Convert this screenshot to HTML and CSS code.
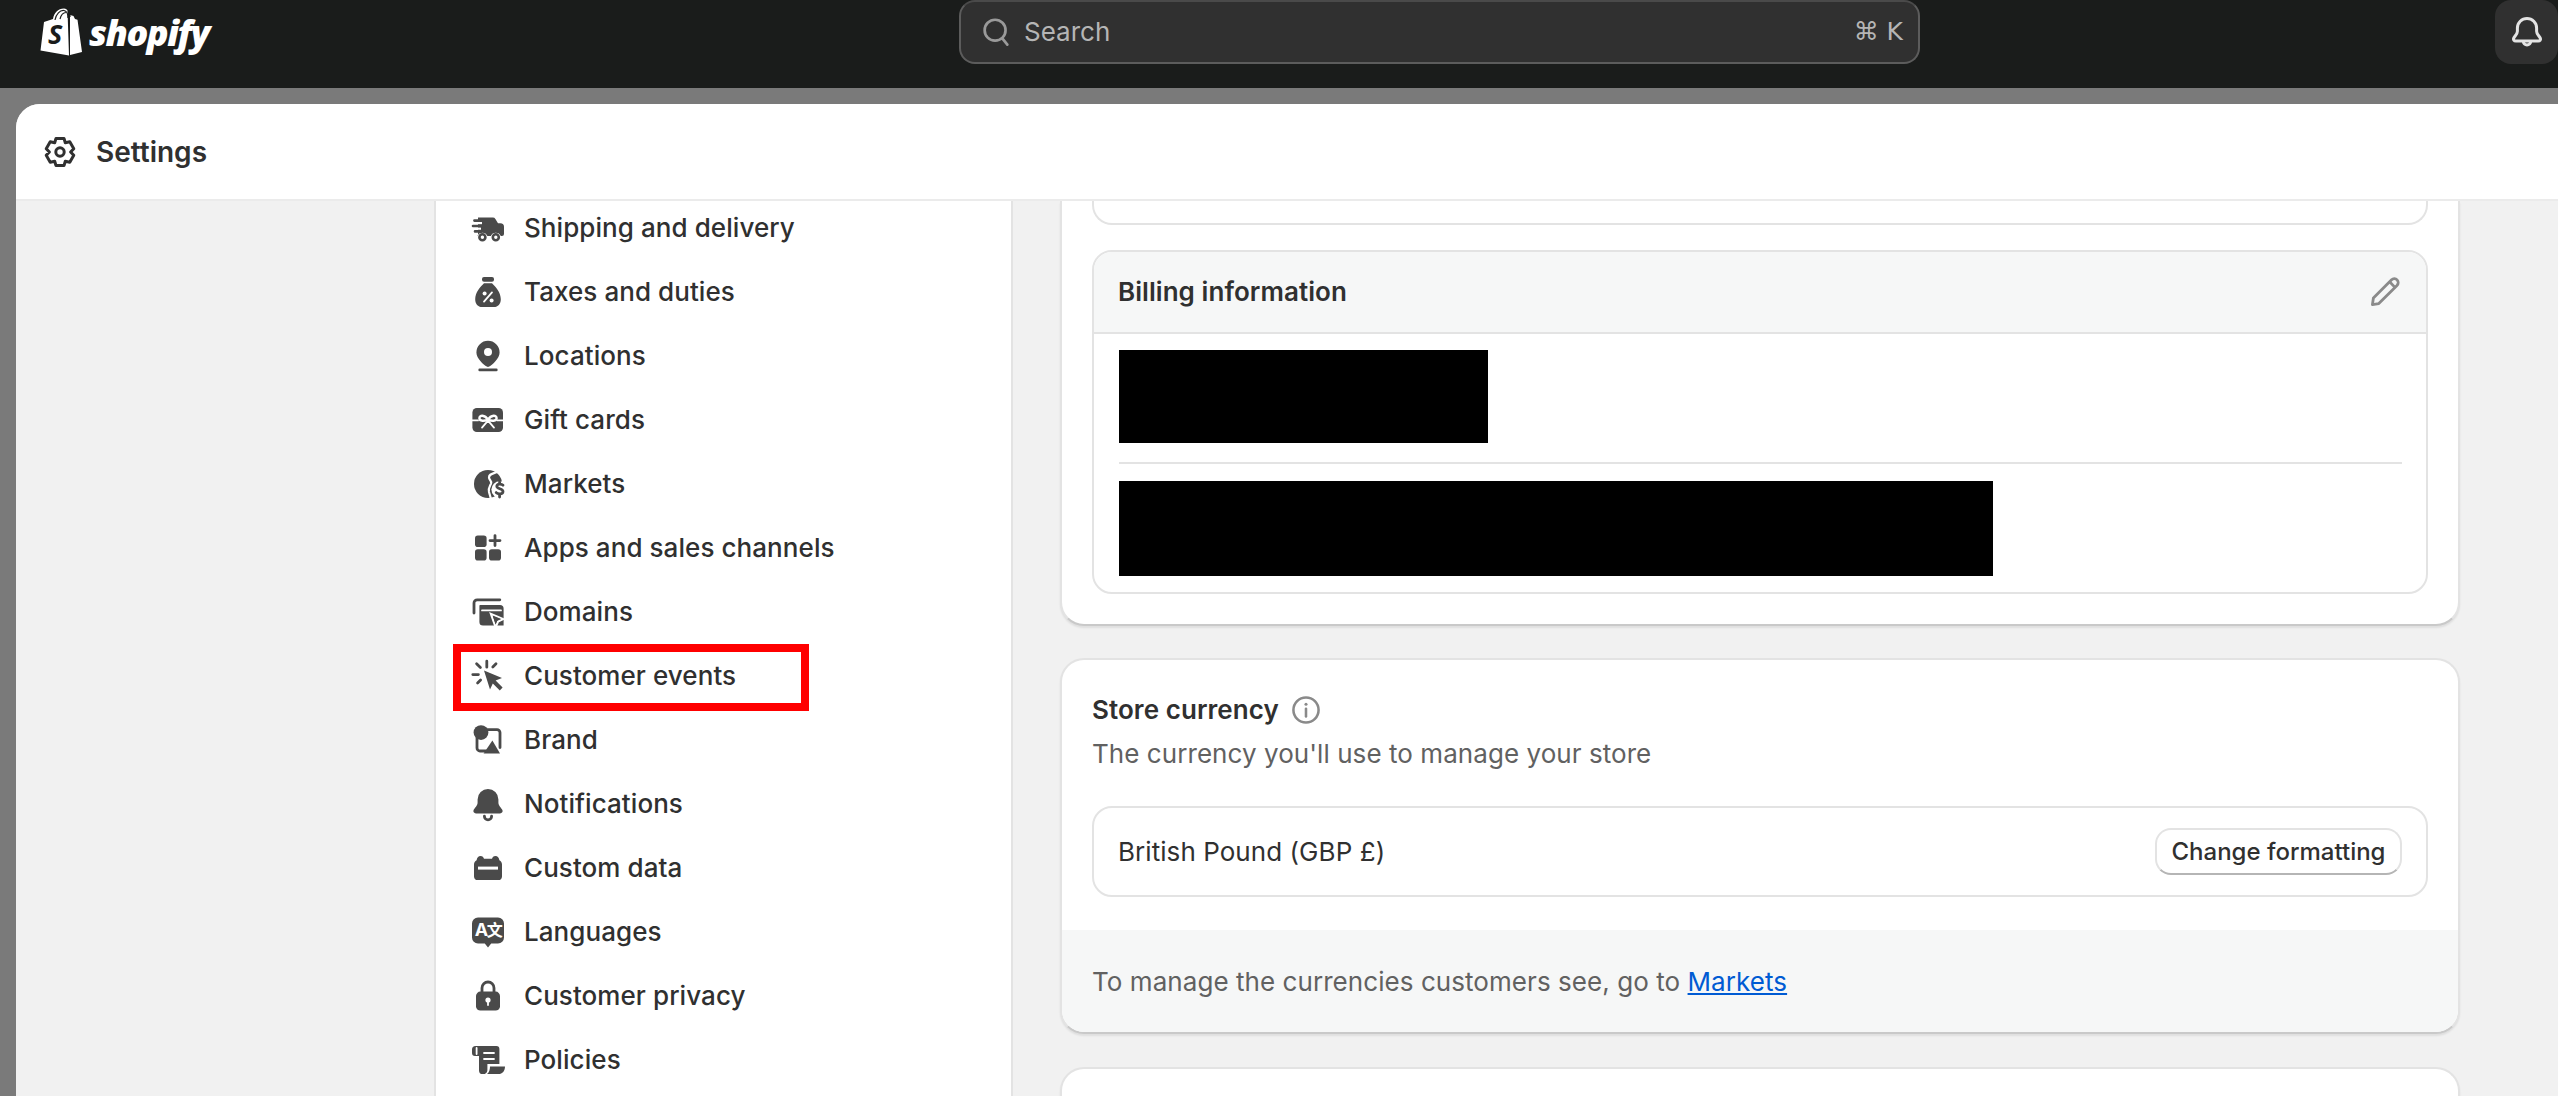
FILE: index.html
```html
<!DOCTYPE html>
<html lang="en">
<head>
<meta charset="utf-8">
<title>Settings</title>
<link rel="stylesheet" href="styles.css">
</head>
<body>
<header class="topbar">
  <div class="brand-slot">
    <svg class="bag" viewBox="0 0 42 48" aria-hidden="true">
      <path class="bag-left" d="M0.5 42.5 L4 14 L13 11 C14 5 18 0.5 24 0.5 C25.5 0.5 26.8 1.2 27.5 2.5 L29 47.5 Z"/>
      <path class="bag-right" d="M30 7 L33.5 8 L35 11 L37.5 11.8 L42 44 L30 47 Z"/>
      <path class="bag-handle" d="M15 12 C16 6 20 2 24 2.5 C27 3 28 6 28 10 M20 11 C21 7 23 4.500 26 4.500 M30 9 C30 6 29.500 4 28 3"/>
      <text class="bag-s" x="8" y="36">S</text>
    </svg>
    <span class="wordmark">shopify</span>
  </div>
  <div class="search">
    <svg class="search-icon" viewBox="0 0 20 20" aria-hidden="true"><circle cx="9.500" cy="9" r="5.800"/><path d="M13.500 13.500 L16.300 17"/></svg>
    <span class="search-label">Search</span>
    <span class="search-key">⌘ K</span>
  </div>
  <div class="top-spacer"></div>
  <button class="bell-btn" aria-label="Notifications">
    <svg class="bell" viewBox="0 0 20 20" aria-hidden="true"><path d="M10 3.200a4.800 4.800 0 0 0-4.800 4.800v1.600c0 1.500-1.300 2.400-1.800 3.400-.4.800.1 1.500 1 1.500h11.200c.9 0 1.400-.7 1-1.500-.5-1-1.800-1.900-1.800-3.400V8A4.800 4.800 0 0 0 10 3.200z"/><path d="M8.200 14.700a1.800 1.800 0 0 0 3.600 0"/></svg>
  </button>
</header>

<div class="workspace">
  <section class="panel">
    <div class="panel-head">
      <svg class="gear" viewBox="0 0 20 20" aria-hidden="true"><path d="M8 3.200H12L12.650 5.400L14.890 4.870L16.890 8.330L15.300 10L16.890 11.670L14.890 15.130L12.650 14.600L12 16.800H8L7.350 14.600L5.110 15.130L3.110 11.670L4.700 10L3.110 8.330L5.110 4.870L7.350 5.400Z"/><circle cx="10" cy="10" r="2.100"/></svg>
      <h1 class="panel-title">Settings</h1>
    </div>
    <div class="panel-body">
      <nav class="side">
        <a class="side-item"><svg class="ico" viewBox="0 0 20 20"><path d="M5 4.800h7.400a1.500 1.500 0 0 1 1.300.7L15 7.600h1.200A1.800 1.800 0 0 1 18 9.400V13a1 1 0 0 1-1 1h-.6a2.700 2.700 0 0 0-5 0H9.700a2.700 2.700 0 0 0-5 0H5z"/><path class="cut" d="M2 7.600h5M2 10.300h4.500"/><path class="dash" d="M3.200 6.300h5.200M2.500 9h5.800M3.500 11.700h3"/><circle class="wheel" cx="7.200" cy="14.600" r="1.500"/><circle class="wheel" cx="13.900" cy="14.600" r="1.500"/></svg><span>Shipping and delivery</span></a>
        <a class="side-item"><svg class="ico" viewBox="0 0 20 20"><rect x="7" y="2.500" width="6" height="2.400" rx="1"/><path d="M8 5.600h4c1.800 1.900 4.400 4.400 4.400 8 0 2.400-1.400 3.900-3.400 3.900H7c-2 0-3.400-1.500-3.400-3.900 0-3.600 2.600-6.100 4.400-8z"/><path class="cut thin" d="M12 10.200 L8 14.800"/><circle class="hole" cx="8.300" cy="10.800" r="1"/><circle class="hole" cx="11.800" cy="14.200" r="1"/></svg><span>Taxes and duties</span></a>
        <a class="side-item"><svg class="ico" viewBox="0 0 20 20"><path d="M10 2.400a5.800 5.800 0 0 1 5.800 5.800c0 3-3.600 6.100-5.200 7.100a1.100 1.100 0 0 1-1.200 0c-1.600-1-5.200-4.100-5.200-7.100A5.800 5.800 0 0 1 10 2.400z"/><circle class="hole" cx="10" cy="8" r="2"/><rect x="5.200" y="16.300" width="9.600" height="1.300" rx=".6"/></svg><span>Locations</span></a>
        <a class="side-item"><svg class="ico" viewBox="0 0 20 20"><rect x="2.200" y="4" width="15.300" height="12" rx="2.200"/><path class="cut thin" d="M2 10.200h3M14.800 10.200h3M7 13.800L10 10.300L13 13.800"/><path class="cut bow" d="M10 10c-1.600-2.900-4.400-2.500-4.300-.8.100 1.500 2.400 1.300 4.300.8zM10 10c1.600-2.900 4.400-2.500 4.300-.8-.1 1.500-2.400 1.300-4.300.8z"/></svg><span>Gift cards</span></a>
        <a class="side-item"><svg class="ico" viewBox="0 0 20 20"><circle cx="10" cy="10" r="7"/><circle class="hole" cx="15.900" cy="12.800" r="4.200"/><path class="cut" d="M14.500 4 C12 5 10.500 5 10.500 6.800 C10.500 8 12 8.300 11.500 9.800 C11 11 10 12 10.500 14 L11.500 17.500"/><path class="line" d="M17.500 10.600c-.6-.7-3-1-3.100.5-.1 1.500 3.200 1 3.100 2.700-.1 1.500-2.700 1.300-3.400.5M15.800 9v1M15.800 15.100v1.400"/></svg><span>Markets</span></a>
        <a class="side-item"><svg class="ico" viewBox="0 0 20 20"><rect x="3.500" y="3.800" width="5.800" height="5.700" rx="1.400"/><rect x="3.500" y="10.600" width="5.800" height="5.700" rx="1.400"/><rect x="10.500" y="10.600" width="6" height="5.700" rx="1.400"/><path class="line" d="M13.500 3.800v5M11 6.300h5"/></svg><span>Apps and sales channels</span></a>
        <a class="side-item"><svg class="ico" viewBox="0 0 20 20"><path class="line" d="M3 10.500V5.500a1.600 1.600 0 0 1 1.600-1.600h11.300"/><path d="M6 6.500h10a1.800 1.800 0 0 1 1.800 1.800v8.500H7.500A1.800 1.800 0 0 1 5.700 15V6.800z"/><path class="cut thin" d="M7 9.200h9.500"/><path class="cut" d="M11.500 11 L17.500 13.500 L15 14.800 L13.800 17.500 Z"/><path d="M12.300 11.800 L16.600 13.500 L14.600 14.400 L13.800 16.400 Z"/></svg><span>Domains</span></a>
        <a class="side-item item-events"><svg class="ico" viewBox="0 0 20 20"><path class="line" d="M9.400 2.600v3M4.300 3.900l1.900 1.900M14 3.900l-1.600 1.600M2.400 9.300h2.800M4.800 13.500l1.500-1.500"/><path d="M8 7.200 L17 11 L13.800 12.300 L17.300 15.800 L15.900 17.200 L12.400 13.700 L11 16.800 Z"/></svg><span>Customer events</span></a>
        <a class="side-item"><svg class="ico" viewBox="0 0 20 20"><circle cx="6.500" cy="6.300" r="3.700"/><path class="line" d="M9 4.800h5.500a1.500 1.500 0 0 1 1.500 1.500v7.500M4.500 9v5a1.500 1.500 0 0 0 1.500 1.500h3"/><path d="M7.800 16.700 L12.200 10.300 L16 16.700 Z"/></svg><span>Brand</span></a>
        <a class="side-item"><svg class="ico" viewBox="0 0 20 20"><path d="M10 2.500a5.200 5.200 0 0 0-5.200 5.200v1.500c0 1.700-1.500 2.600-2 3.800-.4.900.2 1.700 1.200 1.700h12c1 0 1.600-.8 1.200-1.700-.5-1.200-2-2.100-2-3.800V7.700A5.200 5.200 0 0 0 10 2.500z"/><path class="line" d="M8.200 16.100a1.800 1.800 0 0 0 3.600 0"/></svg><span>Notifications</span></a>
        <a class="side-item"><svg class="ico" viewBox="0 0 20 20"><path d="M6.300 4c.9 0 1.500.6 1.700 1.400h4c.2-.8.800-1.400 1.700-1.400 1.200 0 1.800.9 2 2.100.8.400 1.300 1.200 1.300 2.200v5.900a1.900 1.900 0 0 1-1.900 1.800H4.900A1.900 1.900 0 0 1 3 14.200V8.300c0-1 .5-1.800 1.300-2.200C4.500 4.900 5.100 4 6.300 4z"/><rect class="hole" x="5" y="9.300" width="10" height="1.500"/></svg><span>Custom data</span></a>
        <a class="side-item"><svg class="ico" viewBox="0 0 20 20"><path d="M5 2.800h10a3 3 0 0 1 3 3v7a3 3 0 0 1-3 3h-3.400L10 17.800 8.400 15.800H5a3 3 0 0 1-3-3v-7a3 3 0 0 1 3-3z"/><text class="lang-glyph" x="3.400" y="12">A</text><text class="lang-glyph lang-cjk" x="9.400" y="12.200">文</text></svg><span>Languages</span></a>
        <a class="side-item"><svg class="ico" viewBox="0 0 20 20"><path class="line" d="M7 9V6a3 3 0 0 1 6 0v3"/><rect x="4" y="7.800" width="12" height="9.500" rx="2.200"/><circle class="hole" cx="10" cy="12" r="1.300"/><path class="cut thin" d="M10 12.500v2"/></svg><span>Customer privacy</span></a>
        <a class="side-item"><svg class="ico" viewBox="0 0 20 20"><path d="M3.800 3h10.400a1.500 1.500 0 0 1 1.500 1.500V12h-6v3c0 .9-.5 1.700-1.300 2H7.300a1.800 1.800 0 0 1-1.800-1.800V8H3.500A1.500 1.500 0 0 1 2 6.500V4.800A1.800 1.800 0 0 1 3.800 3z"/><path class="cut thin" d="M4.300 4v3M8 6.500h5M8 9.500h5"/><path d="M11 13.200h7.500c0 2.200-1.200 3.800-3.300 3.800H9.500c1-.8 1.500-2.200 1.500-3.800z"/></svg><span>Policies</span></a>
        <div class="item-mark"></div>
      </nav>

      <main class="content">
        <section class="card card-billing">
          <div class="sub-tail"></div>
          <div class="sub sub-billing">
            <div class="sub-head">
              <h2 class="sub-title">Billing information</h2>
              <svg class="pencil" viewBox="0 0 20 20" aria-hidden="true"><path d="M3.700 16.300 L4.200 13 L13.300 3.900 A1.700 1.700 0 0 1 16 6.700 L6.900 15.800 Z"/><path d="M12.300 4.900 L15 7.700"/></svg>
            </div>
            <div class="redact-row"><div class="redact redact-a"></div></div>
            <div class="redact-row redact-row-last"><div class="redact redact-b"></div></div>
          </div>
        </section>

        <section class="card card-currency">
          <div class="currency-top">
            <div class="title-line">
              <h2 class="card-title">Store currency</h2>
              <svg class="info" viewBox="0 0 20 20" aria-hidden="true"><circle cx="10" cy="10" r="7.400"/><path d="M10 9.300v4.500"/><circle class="info-dot" cx="10" cy="6.600" r=".9"/></svg>
            </div>
            <p class="muted">The currency you'll use to manage your store</p>
            <div class="sub sub-currency">
              <span class="currency-name">British Pound (GBP £)</span>
              <button class="btn">Change formatting</button>
            </div>
          </div>
          <div class="card-foot">
            <p class="muted">To manage the currencies customers see, go to <a class="link">Markets</a></p>
          </div>
        </section>

        <section class="card card-next"></section>
      </main>
    </div>
  </section>
</div>
</body>
</html>
```
FILE: styles.css
```css
* { box-sizing: border-box; }
html, body { margin: 0; height: 1096px; overflow: hidden; }
body {
  background: #7a7a7a;
  font-family: Inter, "Noto Sans", sans-serif;
  font-size: 26px;
  line-height: 36px;
  color: #303030;
}
h1, h2, p { margin: 0; font: inherit; }
button { font: inherit; }

/* top bar */
.topbar { height: 88px; background: #1a1c1b; display: flex; align-items: flex-start; }
.brand-slot { width: 959px; height: 64px; padding: 8px 0 0 40px; display: flex; align-items: flex-start; gap: 7px; flex: none; }
.bag { width: 42px; height: 48px; flex: none; }
.bag-left, .bag-right { fill: #fff; }
.bag-handle { fill: none; stroke: #1a1c1b; stroke-width: 1.200; }
.bag-s { fill: #1a1c1b; font: italic 700 27px "Open Sans", sans-serif; }
.wordmark { font: italic 800 36px/50px "Open Sans", sans-serif; color: #fff; letter-spacing: -1.500px; }
.search {
  width: 961px; height: 64px; flex: none;
  background: #303030; border: 2px solid #5c5c5c; border-top-color: #4a4a4a;
  border-radius: 16px;
  display: flex; align-items: center; padding: 0 15px 0 17px;
  color: #b5b5b5;
}
.search-icon { width: 36px; height: 36px; fill: none; stroke: #9a9a9a; stroke-width: 1.500; stroke-linecap: round; flex: none; margin-right: 10px; }
.search-label { flex: 1; }
.search-key { font-family: "DejaVu Sans", Inter, sans-serif; font-size: 25px; }
.top-spacer { flex: 1; }
.bell-btn {
  width: 63px; height: 64px; border: 0; padding: 0;
  background: #303030; border-radius: 16px;
  display: flex; align-items: center; justify-content: center;
}
.bell { width: 40px; height: 40px; fill: none; stroke: #e3e3e3; stroke-width: 1.500; stroke-linejoin: round; }

/* panel */
.workspace { padding: 16px 0 0 16px; height: 1008px; }
.panel { height: 992px; background: #f1f1f1; border-top-left-radius: 24px; overflow: hidden; display: flex; flex-direction: column; }
.panel-head {
  height: 97px; flex: none; background: #fff; border-bottom: 2px solid #ebebeb;
  display: flex; align-items: center; padding: 0 0 0 24px; gap: 16px;
}
.gear { width: 40px; height: 40px; fill: none; stroke: #303030; stroke-width: 1.500; stroke-linejoin: round; }
.panel-title { font-size: 28px; font-weight: 600; }
.panel-body { flex: 1; min-height: 0; display: flex; align-items: flex-start; padding-left: 418px; overflow: hidden; }

/* sidebar */
.side {
  position: relative;
  width: 579px; height: 900px; flex: none; margin-top: -5px;
  background: #fff; border-left: 2px solid #e3e3e3; border-right: 2px solid #e3e3e3;
  padding-left: 32px;
}
.side-item { height: 64px; display: flex; align-items: center; gap: 16px; font-weight: 500; letter-spacing: .07px; color: #303030; }
.ico { width: 40px; height: 40px; flex: none; fill: #4a4a4a; }
.ico .cut { fill: none; stroke: #fff; stroke-width: 1.100; }
.ico .thin { stroke-width: .9; stroke-linecap: round; }
.ico .bow { stroke-width: 1.200; }
.ico .dash { fill: none; stroke: #4a4a4a; stroke-width: 1.300; stroke-linecap: round; }
.ico .wheel { fill: #fff; stroke: #4a4a4a; stroke-width: 1.300; }
.ico .hole { fill: #fff; }
.ico .line { fill: none; stroke: #4a4a4a; stroke-width: 1.400; stroke-linecap: round; }
.lang-glyph { fill: #fff; font: 700 9px Inter, sans-serif; }
.lang-cjk { font: 700 8px "Noto Sans CJK SC", sans-serif; }
.item-mark {
  position: absolute; left: 17px; top: 448px;
  width: 356px; height: 67px; border: 8px solid #ff0000;
}

/* main column */
.content { width: 1400px; margin-left: 47px; flex: none; display: flex; flex-direction: column; }
.card {
  background: #fff; border: 2px solid #e3e3e3; border-bottom-color: #c9c9c9; border-radius: 24px;
  box-shadow: 0 2px 2px rgba(0,0,0,.08);
  overflow: hidden;
}
.card-billing { border-top: 0; border-top-left-radius: 0; border-top-right-radius: 0; padding: 0 30px 32px; height: 425px; flex: none; }
.sub { border: 2px solid #e3e3e3; border-radius: 20px; background: #fff; }
.sub-tail { height: 24px; border: 2px solid #e3e3e3; border-top: 0; border-radius: 0 0 20px 20px; margin-bottom: 25px; }
.sub-billing { height: 344px; overflow: hidden; }
.sub-head {
  height: 82px; background: #f6f7f7; border-bottom: 2px solid #e3e3e3;
  display: flex; align-items: center; justify-content: space-between; padding: 0 25px 0 24px;
}
.sub-title { font-weight: 600; letter-spacing: .06px; }
.pencil { width: 40px; height: 40px; margin-right: -4px; fill: none; stroke: #8a8a8a; stroke-width: 1.400; stroke-linejoin: round; }
.redact-row { margin: 0 24px 0 25px; padding: 16px 0 19px; border-bottom: 2px solid #e3e3e3; }
.redact-row-last { border-bottom: 0; padding: 17px 0 0; }
.redact { background: #000; }
.redact-a { width: 369px; height: 93px; }
.redact-b { width: 874px; height: 95px; }

.card-currency { margin-top: 32px; height: 376px; flex: none; display: flex; flex-direction: column; }
.currency-top { padding: 32px 30px 0; flex: 1; }
.title-line { display: flex; align-items: center; gap: 12px; }
.card-title { font-weight: 600; letter-spacing: .06px; }
.info { width: 34px; height: 34px; margin-left: -2px; fill: none; stroke: #8a8a8a; stroke-width: 1.500; stroke-linecap: round; }
.info-dot { fill: #8a8a8a; stroke: none; }
.muted { color: #616161; font-weight: 400; letter-spacing: .06px; }
.title-line + .muted { margin-top: 8px; }
.sub-currency { margin-top: 34px; height: 91px; display: flex; align-items: center; justify-content: space-between; padding: 0 24px; }
.currency-name { font-weight: 400; letter-spacing: .06px; }
.btn {
  height: 47px; width: 247px; padding: 0; background: #fff; color: #303030; font-size: 24px; font-weight: 500;
  border: 2px solid #e3e3e3; border-bottom-color: #b5b5b5; border-radius: 16px;
}
.card-foot { height: 102px; flex: none; background: #f6f7f7; padding: 2px 30px 0; display: flex; align-items: center; }
.link { color: #005bd3; text-decoration: underline; }
.card-next { margin-top: 33px; height: 300px; flex: none; }
```
